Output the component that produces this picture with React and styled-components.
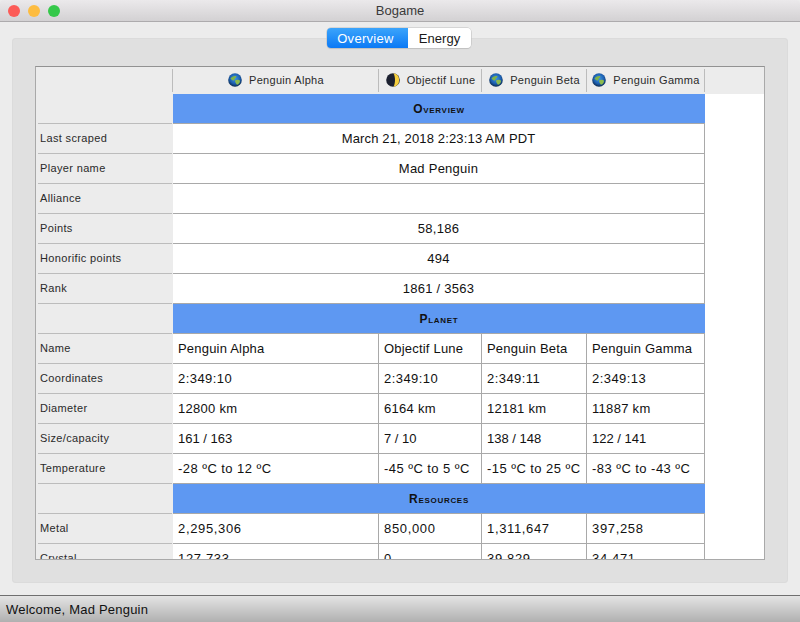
import React from "react";
import styled, { createGlobalStyle } from "styled-components";

const Global = createGlobalStyle`
  html, body { margin: 0; padding: 0; background: #ececec; }
  body { font-family: "Liberation Sans", Arial, sans-serif; color: #111; overflow: hidden; }
`;

const Window = styled.div`
  width: 800px;
  height: 622px;
  display: flex;
  flex-direction: column;
  background: #ececec;
`;

const TitleBar = styled.div`
  height: 22px;
  box-sizing: border-box;
  display: flex;
  align-items: center;
  justify-content: center;
  position: relative;
  background: linear-gradient(#ebe9eb, #d3d1d3);
  border-bottom: 1px solid #adabad;
  border-radius: 4px 4px 0 0;
  font-size: 13px;
  color: #3a3a3a;
`;

const Lights = styled.div`
  position: absolute;
  left: 8px;
  top: 5px;
  display: flex;
  gap: 8px;
`;

const Light = styled.span`
  width: 12px;
  height: 12px;
  border-radius: 50%;
  background: ${(p) => p.$color};
`;

const Main = styled.div`
  flex: 1;
  display: flex;
  flex-direction: column;
  align-items: stretch;
  padding: 6px 12px 12px;
  min-height: 0;
`;

const Segments = styled.div`
  align-self: center;
  display: flex;
  height: 20px;
  margin: 0 2px -10px 0;
  position: relative;
  z-index: 2;
  border-radius: 4px;
  box-shadow: 0 0 0 0.5px #bdbdbd, 0 1px 1px #c4c4c4;
  font-size: 13px;
  overflow: hidden;
`;

const Segment = styled.div`
  width: ${(p) => p.$w}px;
  box-sizing: border-box;
  display: flex;
  align-items: center;
  justify-content: center;
  padding-right: ${(p) => (p.$active ? 4 : 0)}px;
  letter-spacing: ${(p) => (p.$active ? 0.3 : 0.05)}px;
  color: ${(p) => (p.$active ? "#fff" : "#1a1a1a")};
  background: ${(p) => (p.$active ? "linear-gradient(#3ba4fb, #0b79f5)" : "#fff")};
`;

const Pane = styled.div`
  flex: 1;
  min-height: 0;
  display: flex;
  padding: 28px 23px 23px;
  background: #e0e0e0;
  border-radius: 4px;
  box-shadow: inset 0 0 0 1px #dbdbdb;
`;

const Frame = styled.div`
  flex: 1;
  min-height: 0;
  overflow: hidden;
  background: #fff;
  border: 1px solid #a9a9a9;
  border-top-color: #929292;
`;

const Grid = styled.div`
  display: grid;
  grid-template-columns: 137px 206px 103px 105px 118px 1fr;
  grid-template-rows: 27px;
  grid-auto-rows: 30px;
`;

const HeaderCell = styled.div`
  display: flex;
  align-items: center;
  justify-content: center;
  gap: 7px;
  padding-bottom: 1px;
  background: #ececec;
  font-size: 11px;
  letter-spacing: 0.3px;
  color: #2a2a2a;
  position: relative;
  &::after {
    content: "";
    display: ${(p) => (p.$filler ? "none" : "block")};
    position: absolute;
    right: 0;
    top: 2px;
    bottom: 2px;
    width: 1px;
    background: #bcbcbc;
  }
`;

const Label = styled.div`
  grid-column: 1;
  display: flex;
  align-items: center;
  padding: 0 0 2px 4px;
  background: #ececec;
  font-size: 11px;
  letter-spacing: 0.35px;
  color: #2a2a2a;
  position: relative;
  &::after {
    content: "";
    position: absolute;
    left: 2px;
    right: 1px;
    bottom: 0;
    height: 1px;
    background: #bcbcbc;
  }
`;

const Section = styled.div`
  grid-column: 2 / 6;
  display: flex;
  align-items: center;
  justify-content: center;
  background: #5e98f2;
  border-bottom: 1px solid #a9a9a9;
  font-weight: bold;
  font-variant: small-caps;
  font-size: 12px;
  letter-spacing: 0.7px;
  color: #111;
`;

const Cell = styled.div`
  grid-column: ${(p) => (p.$span ? "2 / 6" : "auto")};
  display: flex;
  align-items: center;
  justify-content: ${(p) => (p.$span ? "center" : "flex-start")};
  padding-left: ${(p) => (p.$span ? 0 : 5)}px;
  background: #fff;
  box-sizing: border-box;
  border-right: 1px solid #a9a9a9;
  border-bottom: 1px solid #a9a9a9;
  font-size: 13px;
  letter-spacing: ${(p) => p.$track}px;
  color: #111;
  white-space: nowrap;
`;

const StatusBar = styled.div`
  height: 27px;
  box-sizing: border-box;
  display: flex;
  align-items: center;
  padding-left: 6px;
  background: linear-gradient(#e4e4e4, #b0b0b0);
  border-top: 1px solid #6f6f6f;
  font-size: 13px;
  letter-spacing: 0.22px;
  color: #111;
`;

function Globe() {
  return (
    <svg width="14" height="14" viewBox="0 0 14 14">
      <defs>
        <radialGradient id="sea" cx="50%" cy="40%" r="62%">
          <stop offset="0" stopColor="#3f95e6" />
          <stop offset="0.6" stopColor="#1c5fb0" />
          <stop offset="1" stopColor="#0a2340" />
        </radialGradient>
      </defs>
      <circle cx="7" cy="7" r="6.8" fill="url(#sea)" />
      <path d="M2.500 5.500C3.500 3.500 6 2.600 8 3c1 .7 0 1.800-1 2.200C6.600 6.600 6 7.800 5 7.600 4 7 3.200 6.400 2.500 5.500z" fill="#7fb24a" />
      <path d="M7 7.500c1.600-1.200 4-.9 5 .2.200 1.800-1.200 3.600-3 4C7.700 10.800 7.200 9 7 7.500z" fill="#8dbb4c" />
    </svg>
  );
}

function Moon() {
  return (
    <svg width="14" height="14" viewBox="0 0 14 14">
      <circle cx="7" cy="7" r="6.800" fill="#1c2030" />
      <path d="M7.500 .3A6.800 6.800 0 0 1 7.500 13.700C9.500 10 9.500 4 7.500 .3z" fill="#f6cf3e" />
    </svg>
  );
}

const planets = [
  { name: "Penguin Alpha", icon: <Globe /> },
  { name: "Objectif Lune", icon: <Moon /> },
  { name: "Penguin Beta", icon: <Globe /> },
  { name: "Penguin Gamma", icon: <Globe /> },
];

const rows = [
  { section: "Overview" },
  { label: "Last scraped", value: "March 21, 2018 2:23:13 AM PDT", track: 0.15 },
  { label: "Player name", value: "Mad Penguin", track: 0.25 },
  { label: "Alliance", value: "", track: 0 },
  { label: "Points", value: "58,186", track: 0.25 },
  { label: "Honorific points", value: "494", track: 0.25 },
  { label: "Rank", value: "1861 / 3563", track: 0.25 },
  { section: "Planet" },
  { label: "Name", track: 0.2, cells: ["Penguin Alpha", "Objectif Lune", "Penguin Beta", "Penguin Gamma"] },
  { label: "Coordinates", track: 0.45, cells: ["2:349:10", "2:349:10", "2:349:11", "2:349:13"] },
  { label: "Diameter", track: 0.3, cells: ["12800 km", "6164 km", "12181 km", "11887 km"] },
  { label: "Size/capacity", track: 0, cells: ["161 / 163", "7 / 10", "138 / 148", "122 / 141"] },
  { label: "Temperature", track: 0.45, cells: ["-28 ºC to 12 ºC", "-45 ºC to 5 ºC", "-15 ºC to 25 ºC", "-83 ºC to -43 ºC"] },
  { section: "Resources" },
  { label: "Metal", track: 0.65, cells: ["2,295,306", "850,000", "1,311,647", "397,258"] },
  { label: "Crystal", track: 0.65, cells: ["127,733", "0", "39,829", "34,471"] },
];

export default function App() {
  return (
    <Window>
      <Global />
      <TitleBar>
        <Lights>
          <Light $color="#fc5b57" />
          <Light $color="#fdbc40" />
          <Light $color="#35c84a" />
        </Lights>
        Bogame
      </TitleBar>
      <Main>
        <Segments>
          <Segment $active $w={81}>Overview</Segment>
          <Segment $w={63}>Energy</Segment>
        </Segments>
        <Pane>
          <Frame>
            <Grid>
              <HeaderCell />
              {planets.map((p) => (
                <HeaderCell key={p.name}>
                  {p.icon}
                  {p.name}
                </HeaderCell>
              ))}
              <HeaderCell $filler />
              {rows.map((r, i) =>
                r.section ? (
                  <React.Fragment key={i}>
                    <Label />
                    <Section>{r.section}</Section>
                  </React.Fragment>
                ) : (
                  <React.Fragment key={i}>
                    <Label>{r.label}</Label>
                    {r.cells ? (
                      r.cells.map((c, j) => <Cell key={j} $track={r.track}>{c}</Cell>)
                    ) : (
                      <Cell $span $track={r.track}>{r.value}</Cell>
                    )}
                  </React.Fragment>
                )
              )}
            </Grid>
          </Frame>
        </Pane>
      </Main>
      <StatusBar>Welcome, Mad Penguin</StatusBar>
    </Window>
  );
}
